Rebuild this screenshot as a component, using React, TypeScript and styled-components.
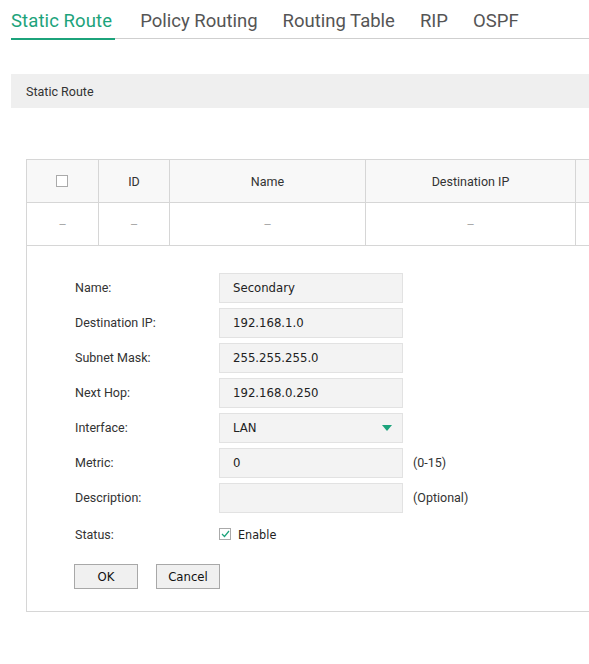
import React from "react";
import styled, { createGlobalStyle } from "styled-components";

const GREEN = "#1ca37b";

const Global = createGlobalStyle`
  html, body { margin: 0; padding: 0; background: #fff; overflow: hidden; }
  body { font-family: Roboto, "Noto Sans", sans-serif; color: #333; }
`;

const Page = styled.div`
  width: 760px;
  padding-left: 11px;
`;

const TabBar = styled.div`
  display: flex;
  gap: 25px;
  height: 38px;
  border-bottom: 1px solid #cfcfcf;
`;

const Tab = styled.div<{ $active?: boolean }>`
  font-size: 18.5px;
  line-height: 1;
  padding-top: 12px;
  height: 26px;
  padding-right: ${(p) => (p.$active ? "3px" : "0")};
  letter-spacing: ${(p) => (p.$active ? "0.1px" : "0")};
  color: ${(p) => (p.$active ? GREEN : "#555")};
  border-bottom: 2px solid ${(p) => (p.$active ? GREEN : "transparent")};
  margin-bottom: -1px;
  box-sizing: content-box;
`;

const SectionBar = styled.div`
  margin-top: 35px;
  height: 34px;
  background: #efefef;
  display: flex;
  align-items: center;
  padding-left: 15px;
  font-size: 12.5px;
  color: #333;
`;

const Panel = styled.div`
  margin-top: 51px;
  margin-left: 15px;
  border-left: 1px solid #d6d6d6;
  border-bottom: 1px solid #d6d6d6;
`;

const Table = styled.div`
  display: grid;
  grid-template-columns: 72px 71px 196px 210px 200px;
  border-top: 1px solid #d6d6d6;
`;

const Cell = styled.div<{ $head?: boolean }>`
  height: 42px;
  display: flex;
  align-items: center;
  justify-content: center;
  font-size: 12.5px;
  color: ${(p) => (p.$head ? "#333" : "#aaa")};
  background: ${(p) => (p.$head ? "#f8f8f8" : "#fff")};
  border-right: 1px solid #d6d6d6;
  border-bottom: 1px solid #d6d6d6;
`;

const HeadBox = styled.span`
  width: 10px;
  height: 10px;
  border: 1px solid #aaa;
  background: #fff;
  margin-left: -1px;
`;

const Form = styled.div`
  padding: 24px 0 22px 48px;
  display: flex;
  flex-direction: column;
`;

const Row = styled.div`
  display: flex;
  align-items: center;
  height: 35px;
`;

const Label = styled.div`
  width: 144px;
  font-size: 12.5px;
  color: #333;
`;

const Field = styled.div`
  height: 28px;
  border: 1px solid #e2e2e2;
  background: #f3f3f3;
  display: flex;
  align-items: center;
  justify-content: space-between;
  padding: 0 10px 0 13px;
  box-sizing: content-box;
  font-family: "DejaVu Sans Condensed", "DejaVu Sans", sans-serif;
  font-size: 13px;
  color: #222;
  width: 159px;
`;

const Hint = styled.div`
  margin-left: 10px;
  font-size: 12.5px;
  color: #333;
`;

const Check = styled.span`
  width: 10px;
  height: 10px;
  border: 1px solid #aaa;
  display: inline-flex;
  align-items: center;
  justify-content: center;
  background: #fff;
  margin-right: 7px;
`;

const StatusRow = styled(Row)`
  height: 38px;
`;

const EnableText = styled.span`
  font-family: "DejaVu Sans Condensed", "DejaVu Sans", sans-serif;
  font-size: 12.5px;
  color: #222;
  display: flex;
  align-items: center;
`;

const Buttons = styled.div`
  display: flex;
  gap: 18px;
  margin-top: 11px;
  margin-left: -1px;
`;

const Button = styled.button`
  width: 64px;
  height: 25px;
  border: 1px solid #a8a8a8;
  background: #f0f0f0;
  font-family: "DejaVu Sans Condensed", "DejaVu Sans", sans-serif;
  font-size: 13px;
  color: #111;
  padding: 0;
  cursor: pointer;
`;

const Caret = () => (
  <svg width="10" height="6" viewBox="0 0 10 6">
    <path d="M0 0 L10 0 L5 6 Z" fill={GREEN} />
  </svg>
);

const fields: { label: string; value: string; hint?: string; select?: boolean }[] = [
  { label: "Name:", value: "Secondary" },
  { label: "Destination IP:", value: "192.168.1.0" },
  { label: "Subnet Mask:", value: "255.255.255.0" },
  { label: "Next Hop:", value: "192.168.0.250" },
  { label: "Interface:", value: "LAN", select: true },
  { label: "Metric:", value: "0", hint: "(0-15)" },
  { label: "Description:", value: "", hint: "(Optional)" },
];

export default function App() {
  return (
    <>
      <Global />
      <Page>
        <TabBar>
          <Tab $active>Static Route</Tab>
          <Tab>Policy Routing</Tab>
          <Tab>Routing Table</Tab>
          <Tab>RIP</Tab>
          <Tab>OSPF</Tab>
        </TabBar>
        <SectionBar>Static Route</SectionBar>
        <Panel>
          <Table>
            <Cell $head>
              <HeadBox />
            </Cell>
            <Cell $head>ID</Cell>
            <Cell $head>Name</Cell>
            <Cell $head>Destination IP</Cell>
            <Cell $head />
            <Cell>–</Cell>
            <Cell>–</Cell>
            <Cell>–</Cell>
            <Cell>–</Cell>
            <Cell />
          </Table>
          <Form>
            {fields.map((f) => (
              <Row key={f.label}>
                <Label>{f.label}</Label>
                <Field>
                  <span>{f.value}</span>
                  {f.select && <Caret />}
                </Field>
                {f.hint && <Hint>{f.hint}</Hint>}
              </Row>
            ))}
            <StatusRow>
              <Label>Status:</Label>
              <EnableText>
                <Check>
                  <svg width="9" height="8" viewBox="0 0 9 8">
                    <path d="M1 4 L3.5 6.5 L8 1" stroke={GREEN} strokeWidth="1.2" fill="none" />
                  </svg>
                </Check>
                Enable
              </EnableText>
            </StatusRow>
            <Buttons>
              <Button>OK</Button>
              <Button>Cancel</Button>
            </Buttons>
          </Form>
        </Panel>
      </Page>
    </>
  );
}
